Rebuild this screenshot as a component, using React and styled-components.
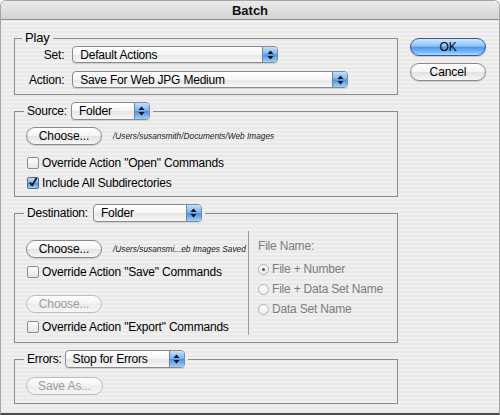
import React from 'react';
import styled, { createGlobalStyle } from 'styled-components';

const Global = createGlobalStyle`
  html, body { margin: 0; padding: 0; background: #ffffff; }
  body { font-family: "Liberation Sans", Arial, sans-serif; }
  * { box-sizing: border-box; }
`;

const Window = styled.div`
  width: 500px;
  height: 415px;
  display: flex;
  flex-direction: column;
  background: repeating-linear-gradient(to bottom, #f0f0f0 0, #f0f0f0 2px, #e9e9e9 2px, #e9e9e9 4px);
  border: 1px solid #a4a4a4;
  border-bottom: 2px solid #4a4a4a;
  border-radius: 6px 6px 0 0;
  overflow: hidden;
  font-size: 12px;
  letter-spacing: -0.2px;
  color: #000;
`;

const TitleBar = styled.div`
  height: 19px;
  flex: none;
  display: flex;
  align-items: center;
  justify-content: center;
  font-weight: bold;
  font-size: 13px;
  letter-spacing: 0;
  color: #111;
  background: linear-gradient(#ececec, #d2d2d2);
  border-bottom: 1px solid #8e8e8e;
`;

const Body = styled.div`
  display: flex;
  gap: 12px;
  padding: 11px 0 0 13px;
`;

const LeftCol = styled.div`
  width: 384px;
  display: flex;
  flex-direction: column;
  gap: 7px;
`;

const RightCol = styled.div`
  display: flex;
  flex-direction: column;
  gap: 7px;
  padding-top: 7px;
`;

const Group = styled.fieldset`
  margin: 0;
  padding: 0;
  min-width: 0;
  border: 1px solid #8c8c8c;
`;

const Legend = styled.legend`
  margin-left: ${p => p.$offset}px;
  padding: 0 3px;
  display: flex;
  align-items: center;
  gap: ${p => p.$gap || 4}px;
  line-height: 14px;
  font-size: ${p => (p.$big ? 13 : 12)}px;
`;

const GroupInner = styled.div`
  padding: ${p => p.$pad};
  display: flex;
  flex-direction: column;
  align-items: flex-start;
`;

const PlayGrid = styled.div`
  display: grid;
  grid-template-columns: auto auto;
  column-gap: 8px;
  row-gap: 8px;
  align-items: center;
  padding: 1px 0 6px 14px;
  justify-content: start;
`;

const FieldLabel = styled.span`
  justify-self: end;
  line-height: 14px;
`;

const Popup = styled.div`
  width: ${p => p.$w}px;
  height: ${p => p.$h || 17}px;
  display: flex;
  align-items: center;
  border: 1px solid #8a8a8a;
  border-radius: 4px;
  background: linear-gradient(#ffffff, #f5f5f5 50%, #e6e6e6 52%, #f7f7f7);
  box-shadow: 0 1px 1px rgba(0, 0, 0, 0.12);
  overflow: hidden;
  flex: none;
`;

const PopupText = styled.span`
  flex: 1;
  padding-left: 7px;
  white-space: nowrap;
  line-height: 14px;
`;

const PopupArrows = styled.span`
  width: 15px;
  align-self: stretch;
  display: flex;
  align-items: center;
  justify-content: center;
  background: linear-gradient(#c4e0fb, #78b1ef 48%, #4a8fe3 52%, #9fd0fb);
  border-left: 1px solid #5f86bd;
`;

const Arrows = () => (
  <svg width="7" height="10" viewBox="0 0 7 10">
    <path d="M3.5 0.5 L6.5 4 L0.5 4 Z" fill="#111" />
    <path d="M3.5 9.5 L6.5 6 L0.5 6 Z" fill="#111" />
  </svg>
);

const Select = ({ w, h, children }) => (
  <Popup $w={w} $h={h}>
    <PopupText>{children}</PopupText>
    <PopupArrows>
      <Arrows />
    </PopupArrows>
  </Popup>
);

const PushButton = styled.button`
  width: ${p => p.$w}px;
  height: 18px;
  padding: 0;
  border-radius: 9px;
  font-family: inherit;
  font-size: 12px;
  letter-spacing: -0.1px;
  line-height: 14px;
  flex: none;
  color: ${p => (p.disabled ? '#9c9c9c' : '#000')};
  border: 1px solid ${p => (p.$primary ? '#34589a' : p.disabled ? '#bdbdbd' : '#8a8a8a')};
  background: ${p =>
    p.$primary
      ? 'linear-gradient(#cfe6fd, #8cc2f6 45%, #4f97ea 52%, #7dc0fb 85%, #b9e2ff)'
      : p.disabled
      ? 'linear-gradient(#fdfdfd, #f3f3f3 50%, #ececec 52%, #f6f6f6)'
      : 'linear-gradient(#ffffff, #f4f4f4 50%, #e2e2e2 52%, #f7f7f7)'};
  box-shadow: ${p => (p.disabled ? 'none' : '0 1px 1px rgba(0,0,0,0.15)')};
`;

const ChooseRow = styled.div`
  display: flex;
  align-items: center;
  gap: 11px;
`;

const PathText = styled.span`
  font-size: 8.3px;
  letter-spacing: 0;
  font-style: italic;
  color: #222;
  white-space: nowrap;
`;

const CheckRow = styled.label`
  display: flex;
  align-items: center;
  gap: 3px;
  height: 16px;
  margin-top: ${p => p.$mt || 0}px;
  margin-left: 1px;
  white-space: nowrap;
`;

const Box = styled.span`
  width: 12px;
  height: 12px;
  border: 1px solid ${p => (p.$checked ? '#4a6a9c' : '#8c8c8c')};
  border-radius: 2px;
  display: flex;
  align-items: center;
  justify-content: center;
  background: ${p =>
    p.$checked
      ? 'linear-gradient(#c6e0fb, #7ab3ef 50%, #4b90e3 52%, #a2d0fb)'
      : 'linear-gradient(#ffffff, #e4e4e4)'};
`;

const Check = ({ checked, label, mt }) => (
  <CheckRow $mt={mt}>
    <Box $checked={checked}>
      {checked && (
        <svg width="11" height="11" viewBox="0 0 11 11" style={{ marginTop: -2 }}>
          <path d="M2 5.5 L4.5 8.5 L9.5 0.5" fill="none" stroke="#111" strokeWidth="2" />
        </svg>
      )}
    </Box>
    <span>{label}</span>
  </CheckRow>
);

const Spacer = styled.div`
  height: ${p => p.$h}px;
`;

const DestColumns = styled.div`
  display: flex;
  padding: 9px 0 7px 0;
`;

const DestLeft = styled.div`
  width: 233px;
  padding: 9px 0 0 11px;
  display: flex;
  flex-direction: column;
  align-items: flex-start;
`;

const DestRight = styled.div`
  flex: 1;
  border-left: 1px solid #9a9a9a;
  padding: 8px 0 0 9px;
  color: #7d7d7d;
  display: flex;
  flex-direction: column;
`;

const FileNameLabel = styled.div`
  line-height: 14px;
  margin-bottom: 6px;
`;

const RadioRow = styled.div`
  display: flex;
  align-items: center;
  gap: 3px;
  height: 20px;
`;

const RadioDot = styled.span`
  width: 11px;
  height: 11px;
  border-radius: 50%;
  border: 1px solid #b0b0b0;
  background: linear-gradient(#ffffff, #ececec);
  display: flex;
  align-items: center;
  justify-content: center;
  &::after {
    content: '';
    width: 3px;
    height: 3px;
    border-radius: 50%;
    background: ${p => (p.$on ? '#555' : 'transparent')};
  }
`;

const Radio = ({ on, label }) => (
  <RadioRow>
    <RadioDot $on={on} />
    <span>{label}</span>
  </RadioRow>
);

export default function App() {
  return (
    <>
      <Global />
      <Window>
        <TitleBar>Batch</TitleBar>
        <Body>
          <LeftCol>
            <Group>
              <Legend $offset={7} $big>Play</Legend>
              <PlayGrid>
                <FieldLabel>Set:</FieldLabel>
                <Select w={206}>Default Actions</Select>
                <FieldLabel>Action:</FieldLabel>
                <Select w={276}>Save For Web JPG Medium</Select>
              </PlayGrid>
            </Group>

            <Group>
              <Legend $offset={9}>
                <span>Source:</span>
                <Select w={79} h={18}>Folder</Select>
              </Legend>
              <GroupInner $pad="7px 0 5px 11px">
                <ChooseRow>
                  <PushButton $w={76}>Choose...</PushButton>
                  <PathText>/Users/susansmith/Documents/Web Images</PathText>
                </ChooseRow>
                <Check mt={10} label={'Override Action "Open" Commands'} />
                <Check mt={4} checked label="Include All Subdirectories" />
              </GroupInner>
            </Group>

            <Group>
              <Legend $offset={9} $gap={5}>
                <span>Destination:</span>
                <Select w={109} h={18}>Folder</Select>
              </Legend>
              <DestColumns>
                <DestLeft>
                  <ChooseRow>
                    <PushButton $w={76}>Choose...</PushButton>
                    <PathText>/Users/susansmi...eb Images Saved</PathText>
                  </ChooseRow>
                  <Check mt={6} label={'Override Action "Save" Commands'} />
                  <Spacer $h={15} />
                  <PushButton $w={76} disabled>Choose...</PushButton>
                  <Check mt={6} label={'Override Action "Export" Commands'} />
                </DestLeft>
                <DestRight>
                  <FileNameLabel>File Name:</FileNameLabel>
                  <Radio on label="File + Number" />
                  <Radio label="File + Data Set Name" />
                  <Radio label="Data Set Name" />
                </DestRight>
              </DestColumns>
            </Group>

            <Group>
              <Legend $offset={9} $gap={3}>
                <span>Errors:</span>
                <Select w={120} h={18}>Stop for Errors</Select>
              </Legend>
              <GroupInner $pad="9px 0 8px 11px">
                <PushButton $w={77} disabled>Save As...</PushButton>
              </GroupInner>
            </Group>
          </LeftCol>

          <RightCol>
            <PushButton $w={76} $primary>OK</PushButton>
            <PushButton $w={76}>Cancel</PushButton>
          </RightCol>
        </Body>
      </Window>
    </>
  );
}
